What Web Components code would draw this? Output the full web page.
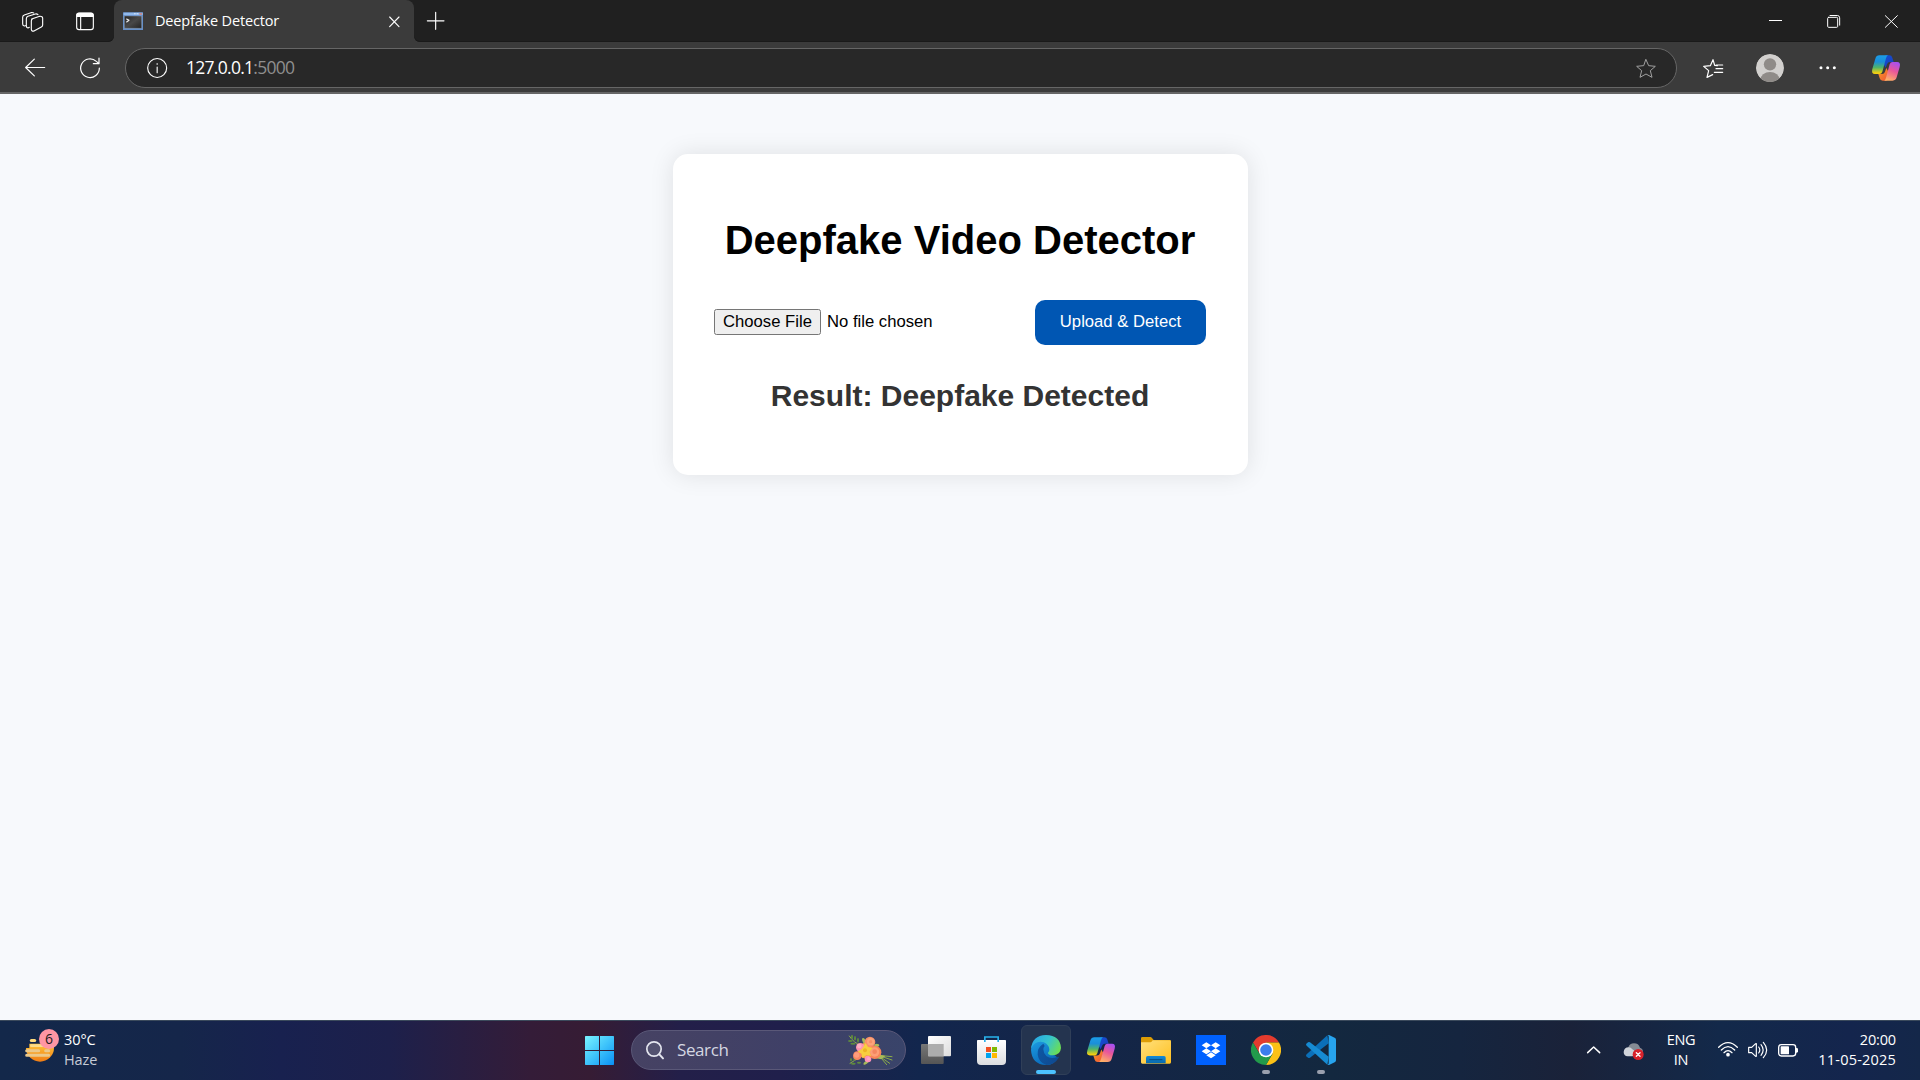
<!DOCTYPE html>
<html lang="en">
<head>
<meta charset="utf-8">
<title>Deepfake Detector</title>
<style>
  html, body { margin: 0; height: 100%; overflow: hidden; }
  body { display: flex; flex-direction: column; width: 1920px; height: 1080px; background: #f7f9fc; font-family: "Open Sans", "Noto Sans", sans-serif; }
</style>
</head>
<body>
<tab-strip></tab-strip>
<address-toolbar></address-toolbar>
<page-view>
  <detector-card>
    <span slot="title">Deepfake Video Detector</span>
    <span slot="result">Result: Deepfake Detected</span>
  </detector-card>
</page-view>
<task-bar></task-bar>

<script>
const copilot = (p) => `
  <defs>
    <linearGradient id="a" x1="0" y1="0" x2="0" y2="1"><stop offset="0" stop-color="#1b9de8"/><stop offset=".35" stop-color="#1b8fd8"/><stop offset=".65" stop-color="#4fb56a"/><stop offset=".95" stop-color="#f5cf10"/></linearGradient>
    <linearGradient id="b" x1=".7" y1="0" x2=".3" y2="1"><stop offset="0" stop-color="#a850f0"/><stop offset=".45" stop-color="#e9569a"/><stop offset="1" stop-color="#ffb066"/></linearGradient>
    <linearGradient id="c" x1="0" y1="0" x2="1" y2="1"><stop offset="0" stop-color="#1452d8"/><stop offset="1" stop-color="#1b3cb8"/></linearGradient>
    <linearGradient id="d" x1="0" y1="0" x2="1" y2="1"><stop offset="0" stop-color="#f7a020"/><stop offset="1" stop-color="#f0503c"/></linearGradient>
  </defs>
  <g transform="${p}">
    <path fill="url(#c)" d="M40 1h12q7 0 9 7l4 13H54q-7 0-9 7l-4 10-8-14z"/>
    <path fill="url(#d)" d="M44 77H32q-7 0-9-7l-4-13h11q7 0 9-7l4-11 8 14z"/>
    <path fill="url(#a)" d="M48 1H22q-9 0-12 10L1 42q-4 15 8 15h13q7 0 9-7L42 10q2-8 6-9z"/>
    <path fill="url(#b)" d="M36 77h26q9 0 12-10l9-31q4-15-8-15H62q-7 0-9 7L42 68q-2 8-6 9z"/>
  </g>`;
const line = (w, d, c = '#fff') => `<path fill="none" stroke="${c}" stroke-width="${w}" stroke-linecap="round" stroke-linejoin="round" d="${d}"/>`;
const star = 'M139 179l8 18 20 2-15 13 5 20-18-10-18 10 5-20-15-13 20-2z';

// Each entry: left, top, width, height of the view box (3 units to a CSS pixel), then the drawing.
const ICONS = {
  workspaces: [60, 18, 75, 90, line(3.4, 'M95 57l24-8q9-1 9 6v20q0 4-4 6l-22 12q-7 2-8-5V63q0-4 3-6z M88 82l-4 2q-5-1-5-6V56q0-5 5-7l22-7q5-1 8 2 M76 77l-3 1q-5-1-5-6V52q0-5 5-7l20-7q5-1 8 1')],
  panel: [219, 18, 72, 90, line(3.4, 'M237 39h36q7 0 7 7v36q0 7-7 7h-36q-7 0-7-7V46q0-7 7-7z M242 50v38') + '<path fill="#fff" d="M229 51v-5q0-8 8-8h36q8 0 8 8v5z"/>'],
  console: [369, 18, 60, 90, '<defs><linearGradient id="a" x1="0" y1="0" x2="1" y2="1"><stop stop-color="#252525"/><stop offset=".5" stop-color="#484848"/><stop offset="1" stop-color="#222"/></linearGradient></defs><path fill="#648fc9" d="M369 37h60v53h-60z"/><path fill="#91b9ec" d="M371 38h57v7h-57z"/><path fill="#d9e6f5" d="M402 40h5v3h-5zM410 40h5v3h-5z"/><path fill="#d97b6b" d="M418 40h8v4h-8z"/><path fill="url(#a)" stroke="#b9c5d3" stroke-width="1" d="M373 48h52v37h-52z"/>' + line(3.5, 'M380 57l7 4-7 5', '#eee')],
  tabclose: [1161, 18, 44, 90, line(3.4, 'M1169 51l28 29m0-29l-28 29')],
  plus: [1278, 18, 58, 90, line(3.4, 'M1282 62.5h50M1307 37v51')],
  min: [501, 18, 51, 90, '<path fill="#fff" d="M507 60h39v3h-39z"/>'],
  restore: [675, 18, 51, 90, line(3, 'M686 52h24q3 0 3 3v24q0 3-3 3h-24q-3 0-3-3V55q0-3 3-3z M690 46.5h22q7 0 7 7v22')],
  winclose: [849, 18, 51, 90, line(3, 'M856 47l36 35m0-35l-36 35')],
  back: [69, 159, 72, 90, line(3.6, 'M134 202.500H77m26-25l-26 25 26 25')],
  refresh: [234, 159, 72, 90, line(3.6, 'M298 204a28 28 0 1 1-9-20l7 6 M297 174v17h-17')],
  info: [436, 159, 72, 90, '<circle cx="472.500" cy="204" r="28.500" fill="none" stroke="#fff" stroke-width="3.400"/><circle cx="472.500" cy="192" r="2.400" fill="#fff"/>' + line(3.4, 'M472.500 201v17')],
  star: [103, 159, 72, 90, line(3, star, '#a0a0a0')],
  favorites: [303, 159, 72, 90, line(3.6, 'M344 196l-5-17-8 18-20 2 15 13-5 20 17-8 M344 196l8 1 M348 195h20M348 206h20M343 217h25')],
  avatar: [465, 159, 90, 90, '<clipPath id="c"><circle cx="510" cy="204" r="42"/></clipPath><g clip-path="url(#c)"><circle cx="510" cy="204" r="42" fill="#d2d0ce"/><circle cx="510" cy="193" r="18.500" fill="#8f8b88"/><ellipse cx="510" cy="240" rx="29" ry="24" fill="#8f8b88"/></g>'],
  dots: [651, 159, 64, 90, '<g fill="#fff"><circle cx="663" cy="203" r="4.500"/><circle cx="683" cy="203" r="4.500"/><circle cx="703" cy="203" r="4.500"/></g>'],
  copilotTop: [813, 159, 90, 90, copilot('translate(816 165)')],

  haze: [72, 66, 99, 108, '<defs><linearGradient id="a" x1="0" y1="0" x2="0" y2="1"><stop stop-color="#ffc63a"/><stop offset="1" stop-color="#f07c14"/></linearGradient></defs><path fill="url(#a)" d="M162 104v12a42 42 0 0 1-84 0v-12z"/><path fill="#15274a" d="M72 100h16v17H76v-4zM72 144h12l-6-12h-6z"/>' + line(9, 'M94 94.500h10', '#ffdc7c') + line(8, 'M94 110h52', '#fbdc8a') + line(9, 'M80 125h36M137 125h9M80 139h66', '#ecc98a')],
  windows: [45, 75, 87, 90, '<defs><linearGradient id="a" gradientUnits="userSpaceOnUse" x1="45" y1="78" x2="132" y2="165"><stop stop-color="#7af4ff"/><stop offset=".5" stop-color="#3fc4fb"/><stop offset="1" stop-color="#0a90f5"/></linearGradient></defs><path fill="url(#a)" d="M47 78h40v42H45V80q0-2 2-2zM90 78h40q2 0 2 2v40H90zM45 123h42v42H47q-2 0-2-2zM90 123h42v40q0 2-2 2H90z"/>'],
  search: [225, 75, 60, 90, '<circle cx="252" cy="117" r="21.500" fill="#535270" stroke="#e4e6ef" stroke-width="5"/>' + line(6, 'M268 133l11 12', '#e4e6ef')],
  flowers: [834, 72, 138, 96, `
    ${line(3, 'M838 78q14 22 34 27M840 160q14-9 26-16M925 134l25 30M925 136l34 24M925 136l41 14M925 136l41 4', '#8bab49')}
    <g fill="#5f8b3d"><ellipse cx="846" cy="81" rx="3" ry="7"/><ellipse cx="841" cy="93" rx="7" ry="3"/><ellipse cx="855" cy="85" rx="3" ry="7"/><ellipse cx="849" cy="101" rx="8" ry="3"/><ellipse cx="864" cy="91" rx="3" ry="7"/><ellipse cx="843" cy="149" rx="3" ry="5"/><ellipse cx="853" cy="146" rx="3" ry="6"/><ellipse cx="850" cy="161" rx="7" ry="3"/><ellipse cx="867" cy="158" rx="6" ry="3"/></g>
    <g fill="#a8bb59"><ellipse cx="883" cy="94" rx="5" ry="11" transform="rotate(-25 883 94)"/><ellipse cx="920" cy="106" rx="8" ry="5"/><ellipse cx="888" cy="158" rx="9" ry="4" transform="rotate(-35 888 158)"/><path d="M920 132l26 6-12 10-20-4z"/></g>
    <circle cx="889" cy="122" r="24" fill="#f5a548"/>
    <circle cx="871" cy="112" r="13" fill="#ff93ae"/><circle cx="868" cy="108" r="7" fill="#ffb0c2"/>
    <circle cx="900" cy="96" r="16" fill="#fa9068"/><circle cx="902" cy="95" r="11" fill="#fda47b"/><circle cx="902" cy="95" r="5" fill="#f98f68"/>
    <circle cx="862" cy="137" r="13" fill="#fb8662"/><circle cx="860" cy="135" r="8" fill="#fd9d7c"/>
    <circle cx="894" cy="147" r="10" fill="#ff91bb"/><circle cx="896" cy="146" r="5" fill="#ffa8c4"/>
    <circle cx="914" cy="127" r="20" fill="#f88459"/><circle cx="914" cy="126" r="14" fill="#fc9f77"/><circle cx="914" cy="125" r="7" fill="#f38660"/>
    <path fill="#f8cf3f" d="M887 99l7 12 14 2-9 12 4 13-14-3-12 10-2-14-12-6 13-9z"/><circle cx="885" cy="121" r="6" fill="#eeb426"/>`],
  taskview: [1050, 75, 96, 90, '<defs><linearGradient id="a" x1="0" y1="0" x2="1" y2="1"><stop stop-color="#fff"/><stop offset="1" stop-color="#ddd"/></linearGradient><linearGradient id="b" x1="0" y1="0" x2="0" y2="1"><stop stop-color="#777"/><stop offset="1" stop-color="#555"/></linearGradient></defs><rect x="1053" y="102" width="68" height="60" rx="3" fill="url(#b)"/><rect x="1074" y="78" width="69" height="61" rx="3" fill="url(#a)"/><path fill="#adadad" d="M1077 102h44v37h-47v-34q0-3 3-3z"/>'],
  store: [48, 75, 87, 90, '<defs><linearGradient id="a" x1="0" y1="0" x2="0" y2="1"><stop stop-color="#fff"/><stop offset="1" stop-color="#dcdde0"/></linearGradient></defs><path fill="none" stroke="#29b2ec" stroke-width="5" d="M71.500 96V81h40v15"/><path fill="url(#a)" d="M50 90h83q2 0 2 2v61q0 12-12 12H60q-12 0-12-12V92q0-2 2-2z"/><path fill="none" stroke="#29b2ec" stroke-width="5" d="M71.500 90v6M111.500 90v6"/><path fill="#f25022" d="M75 111h15v15H75z"/><path fill="#7fba00" d="M93 111h15v15H93z"/><path fill="#00a4ef" d="M75 129h15v15H75z"/><path fill="#ffb900" d="M93 129h15v15H93z"/>'],
  edge: [213, 75, 90, 90, '<defs><linearGradient id="a" x1="0" y1=".3" x2="1" y2=".7"><stop stop-color="#28a7e6"/><stop offset=".5" stop-color="#35c4cd"/><stop offset="1" stop-color="#6fdf4c"/></linearGradient><linearGradient id="b" x1="0" y1="0" x2=".6" y2="1"><stop stop-color="#1d9de2"/><stop offset="1" stop-color="#0967b8"/></linearGradient><linearGradient id="c" x1="0" y1="0" x2="1" y2=".5"><stop stop-color="#0d58a6"/><stop offset="1" stop-color="#0f4a91"/></linearGradient></defs><path fill="url(#b)" d="M213 119q0-22 25-26 25 0 32 16 0 18 23 34-10 22-35 22-43-2-45-46z"/><path fill="url(#c)" d="M250 101q-19 12-17 33 3 23 26 31 25 0 38-23-1-3-5-1-20 8-33-3-9-9-9-20 0-6 4-10z"/><path fill="url(#a)" d="M213 117q3-40 45-42 43 1 45 39-2 22-25 22-15-1-14-8 5-4 4-10-1-14-17-21-26-7-38 20z"/>'],
  copilot: [378, 75, 90, 90, copilot('translate(381 81) scale(1 .97)')],
  folder: [543, 75, 90, 90, '<defs><linearGradient id="a" x1="0" y1="0" x2="1" y2="1"><stop stop-color="#ffe07d"/><stop offset="1" stop-color="#ffc01f"/></linearGradient><linearGradient id="b" x1="0" y1="0" x2="0" y2="1"><stop stop-color="#1389d6"/><stop offset="1" stop-color="#0869ac"/></linearGradient></defs><path fill="#dd9d05" d="M543 85q0-4 4-4h24q3 0 5 3l5 6h48q4 0 4 4v20h-90z"/><path fill="url(#a)" d="M543 97h28q3 0 5-3l2-3h51q4 0 4 4v62q0 4-4 4h-82q-4 0-4-4z"/><path fill="url(#b)" d="M558 160v-17q0-5 5-5h49q5 0 5 5v17z"/>' + line(3, 'M569 149h37', '#064d82')],
  dropbox: [708, 75, 90, 90, '<path fill="#0061fe" d="M708 75h90v90h-90z"/><path fill="#fff" d="M739 97l14 9-14 9-14-9zM767 97l14 9-14 9-14-9zM739 115l14 9-14 9-14-9zM767 115l14 9-14 9-14-9zM753 127l14 9-14 9-14-9z"/>'],
  chrome: [873, 75, 90, 90, '<path fill="#e33b2e" d="M879 97.500a45 45 0 0 1 78 0H918l-19 33.700z"/><path fill="#fbc116" d="M957 97.500a45 45 0 0 1-39 67.500l19.500-33.800L918 97.500z"/><path fill="#229a4b" d="M918 165a45 45 0 0 1-39-67.500l19.500 33.700h39z"/><circle cx="918" cy="120" r="22" fill="#fff"/><circle cx="918" cy="120" r="17.500" fill="#3b7ded"/>'],
  vscode: [1038, 75, 90, 90, '<path fill="#0b6fb8" d="M1039 139q-2-3 1-6l62-57 4 24-56 43q-3 2-6 0z"/><path fill="#168bd3" d="M1039 101q-2 3 1 6l62 57 4-24-56-43q-3-2-6 0z"/><path fill="#27a4ee" d="M1102 76q2-2 5-1l17 8q4 2 4 6v62q0 4-4 6l-17 8q-3 1-5-1 4 1 4-4V80q0-5-4-4z"/>'],
  chevron: [76, 75, 46, 90, line(4.5, 'M81 128l18-17 18 17')],
  cloud: [187, 75, 66, 90, '<path fill="#858b94" d="M203 112q4-12 17-12 14 0 18 13 10 4 9 14l-8 7-35 4z"/><path fill="#d0d4da" d="M201 139q-12-1-12-13 1-14 15-14 7 0 11 6l12 8-11 13z"/><circle cx="232.500" cy="133.500" r="16.500" fill="#d8222b"/>' + line(4, 'M227 128l11 11m0-11l-11 11')],
  wifi: [471, 75, 66, 90, line(4, 'M476 112q28-28 56 0M484 120q20-20 40 0M492 128q12-12 24 0') + '<circle cx="504" cy="134" r="5.500" fill="#fff"/>'],
  speaker: [561, 75, 66, 90, line(3.5, 'M566 112h9l12-11q2-1 2 1v36q0 2-2 1l-12-11h-9z M596 111q7 9 0 18 M603 104q13 16 0 32 M610 97q20 23 0 46')],
  battery: [651, 75, 66, 90, '<rect x="656" y="104" width="51" height="34" rx="8" fill="none" stroke="#fff" stroke-width="4"/><rect x="662" y="109" width="25" height="24" rx="2" fill="#fff"/><path fill="#fff" d="M708 114h2q4 0 4 4v6q0 4-4 4h-2z"/>']
};

class UiIcon extends HTMLElement {
  constructor() { super(); this.attachShadow({ mode: 'open' }); }
  connectedCallback() {
    const [x, y, w, h, body] = ICONS[this.getAttribute('name')];
    this.shadowRoot.innerHTML = `<style>:host{display:block;flex:none;width:${w / 3}px;height:${h / 3}px}svg{display:block;width:100%;height:100%}</style>
      <svg viewBox="${x} ${y} ${w} ${h}" aria-hidden="true">${body}</svg>`;
  }
}
customElements.define('ui-icon', UiIcon);

function define(name, html) {
  const template = document.createElement('template');
  template.innerHTML = html;
  customElements.define(name, class extends HTMLElement {
    constructor() { super(); this.attachShadow({ mode: 'open' }).append(template.content.cloneNode(true)); }
  });
}

define('tab-strip', `
  <style>
    :host { display: flex; flex: none; height: 42px; color: #fff; background: linear-gradient(#202020 20px, #3b3b3b 20px); }
    .side { display: flex; align-items: center; box-sizing: border-box; background: #202020; box-shadow: inset 0 -1px #1a1a1a; }
    .left { width: 114px; padding-left: 20px; gap: 28px; border-bottom-right-radius: 6px; }
    .right { flex: 1; padding-left: 12px; border-bottom-left-radius: 6px; }
    .tab { display: flex; align-items: center; box-sizing: border-box; width: 300px; padding: 0 12px 0 9px; background: #3b3b3b; border-radius: 8px 8px 0 0; }
    .name { flex: 1; margin-left: 12px; font-size: 14.5px; line-height: 20px; letter-spacing: -.17px; white-space: nowrap; }
    .controls { display: flex; gap: 41px; margin-left: auto; padding-right: 20px; }
  </style>
  <div class="side left"><ui-icon name="workspaces"></ui-icon><ui-icon name="panel"></ui-icon></div>
  <div class="tab"><ui-icon name="console"></ui-icon><span class="name">Deepfake Detector</span><ui-icon name="tabclose"></ui-icon></div>
  <div class="side right"><ui-icon name="plus"></ui-icon>
    <div class="controls"><ui-icon name="min"></ui-icon><ui-icon name="restore"></ui-icon><ui-icon name="winclose"></ui-icon></div></div>`);

define('address-toolbar', `
  <style>
    :host { display: flex; flex: none; align-items: center; box-sizing: border-box; height: 52px; padding: 2px 19px 0 23px; background: #3b3b3b; border-bottom: 2px solid #666; }
    .bar { display: flex; align-items: center; box-sizing: border-box; width: 1552px; height: 40px; margin-left: 23px; padding: 0 18px 0 19px; background: #282828; border: 1px solid #666; border-radius: 20px; }
    .url { flex: 1; margin: 0 0 2px 17px; font-size: 17.500px; line-height: 24px; letter-spacing: -.72px; color: #fff; white-space: nowrap; }
    .url span { color: #8f8f8f; }
    .gap { margin-left: 31px; }
  </style>
  <ui-icon name="back"></ui-icon><ui-icon name="refresh" class="gap"></ui-icon>
  <div class="bar"><ui-icon name="info"></ui-icon><div class="url">127.0.0.1<span>:5000</span></div><ui-icon name="star"></ui-icon></div>
  <ui-icon name="favorites" style="margin-left:24px"></ui-icon>
  <ui-icon name="avatar" style="margin-left:30px"></ui-icon>
  <ui-icon name="dots" style="margin-left:32px"></ui-icon>
  <ui-icon name="copilotTop" style="margin-left:32.700px"></ui-icon>`);

define('page-view', `
  <style>:host { display: flex; flex: 1; justify-content: center; align-items: flex-start; box-sizing: border-box; padding: 60px 0 0 1px; background: #f7f9fc; }</style>
  <slot></slot>`);

define('detector-card', `
  <style>
    :host { display: flex; flex-direction: column; box-sizing: border-box; width: 575px; height: 321px; padding: 63px 42px 0 41px; background: #fff; border-radius: 15px; box-shadow: 0 0 25px rgba(0,0,0,.1); font-family: "Liberation Sans", Arial, sans-serif; color: #000; }
    h1 { margin: 0; font-size: 40px; line-height: 46px; text-align: center; white-space: nowrap; }
    h2 { margin: 34px 0 0; font-size: 30px; line-height: 34px; text-align: center; color: #333; white-space: nowrap; }
    form { display: flex; align-items: center; height: 45px; margin-top: 37px; font-size: 16.667px; white-space: nowrap; }
    button { font: inherit; box-sizing: border-box; white-space: nowrap; }
    .choose { width: 107px; height: 26px; margin-bottom: 1px; padding: 0 0 1px; line-height: 19px; color: #000; background: #efefef; border: 1px solid #767676; border-radius: 2.500px; }
    .none { margin: 0 0 2px 6px; line-height: 19px; }
    .upload { width: 171px; height: 45px; margin-left: auto; padding: 0 0 2px; line-height: 19px; color: #fff; background: #0056b3; border: 0; border-radius: 10px; }
  </style>
  <h1><slot name="title"></slot></h1>
  <form onsubmit="return false"><button type="button" class="choose">Choose File</button><span class="none">No file chosen</span><button class="upload">Upload &amp; Detect</button></form>
  <h2><slot name="result"></slot></h2>`);

define('task-app', `
  <style>
    :host { display: flex; flex: none; align-items: center; justify-content: center; position: relative; box-sizing: border-box; width: 50px; height: 50px; border: 1px solid transparent; border-radius: 6px; }
    :host([active]) { background: #24344f; border-color: #303f58; }
    i { display: none; position: absolute; bottom: 0; left: 20px; width: 8px; height: 4px; border-radius: 2px; background: #9aa0ae; }
    :host([running]) i { display: block; }
    :host([active]) i { display: block; left: 14px; width: 20px; background: #4cc2ff; }
  </style><slot></slot><i></i>`);

define('task-bar', `
  <style>
    :host { display: flex; flex: none; align-items: center; box-sizing: border-box; height: 60px; box-shadow: inset 0 1px #3b4a5c; padding-right: 24px; color: #fff; font-size: 14.500px; line-height: 20px;
      background: linear-gradient(90deg, #13284a 0, #15264a 180px, #18214f 280px, #1d204b 390px, #341c38 530px, #361c34 590px, #231f49 680px, #201f4b 780px, #12264d 920px, #142548 1080px, #13283f 1330px, #15253f 1460px, #1a2239 1570px, #13294a 1720px, #14254d 1850px, #142749 1920px); }
    .weather { display: flex; align-items: center; width: 561px; padding-left: 24px; }
    .sun { position: relative; width: 33px; }
    .badge { position: absolute; left: 15px; top: -4px; width: 20px; height: 20px; border-radius: 50%; background: #ff96a3; color: #1c1c1c; font-size: 14px; line-height: 20px; text-align: center; }
    .sun ui-icon { margin-top: -2px; }
    .lines { display: flex; flex-direction: column; white-space: nowrap; letter-spacing: -.3px; }
    .weather .lines, .clock { margin-top: -1px; }
    .weather .lines { letter-spacing: -.1px; }
    .haze { color: #c6cbd6; }
    .search { display: flex; align-items: center; box-sizing: border-box; width: 275px; height: 40px; margin: 0 5px 0 17px; padding: 0 11px 0 13px; border-radius: 20px; background: linear-gradient(90deg, #464263, #3f4067 60%, #39446a); border: 1px solid #5a5878; }
    .search span { flex: 1; margin-left: 12px; color: #d5d7e2; font-size: 17px; letter-spacing: -.4px; line-height: 24px; }
    .apps { display: flex; gap: 5px; }
    .tray { display: flex; align-items: center; margin-left: auto; }
  </style>
  <div class="weather"><div class="sun"><ui-icon name="haze"></ui-icon><span class="badge">6</span></div>
    <div class="lines" style="margin-left:7px"><span>30°C</span><span class="haze">Haze</span></div></div>
  <ui-icon name="windows"></ui-icon>
  <div class="search"><ui-icon name="search"></ui-icon><span>Search</span><ui-icon name="flowers"></ui-icon></div>
  <div class="apps">
    <task-app><ui-icon name="taskview"></ui-icon></task-app>
    <task-app><ui-icon name="store"></ui-icon></task-app>
    <task-app active><ui-icon name="edge"></ui-icon></task-app>
    <task-app><ui-icon name="copilot"></ui-icon></task-app>
    <task-app><ui-icon name="folder"></ui-icon></task-app>
    <task-app><ui-icon name="dropbox"></ui-icon></task-app>
    <task-app running><ui-icon name="chrome"></ui-icon></task-app>
    <task-app running><ui-icon name="vscode"></ui-icon></task-app>
  </div>
  <div class="tray">
    <ui-icon name="chevron"></ui-icon>
    <ui-icon name="cloud" style="margin-left:22px"></ui-icon>
    <div class="lines" style="width:36px;margin-left:18px;text-align:center"><span>ENG</span><span>IN</span></div>
    <ui-icon name="wifi" style="margin-left:18px"></ui-icon>
    <ui-icon name="speaker" style="margin-left:8px"></ui-icon>
    <ui-icon name="battery" style="margin-left:8px"></ui-icon>
    <div class="lines clock" style="width:97px;text-align:right"><span style="letter-spacing:-.15px">20:00</span><span style="letter-spacing:.2px">11-05-2025</span></div>
  </div>`);
</script>
</body>
</html>
